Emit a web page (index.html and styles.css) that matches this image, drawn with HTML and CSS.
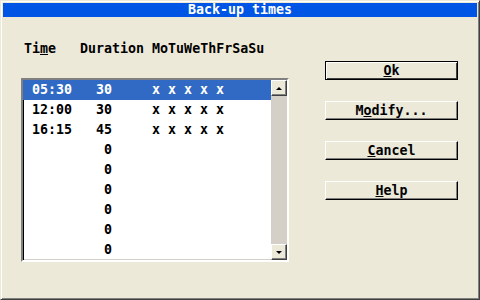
FILE: index.html
```html
<!DOCTYPE html>
<html lang="en">
  <head>
    <meta charset="UTF-8" />
    <title>Back-up times</title>
    <link rel="stylesheet" href="styles.css">
  </head>
  <body>
    <div class="window">
      <div class="titlebar">Back-up times</div>
      <div class="dialog">
        <div class="left">
          <div class="colheads">Ti<u>m</u>e   Duration MoTuWeThFrSaSu</div>
          <div class="listbox">
            <div class="rows">
              <div class="row selected">05:30   30     x x x x x</div>
              <div class="row">12:00   30     x x x x x</div>
              <div class="row">16:15   45     x x x x x</div>
              <div class="row">         0</div>
              <div class="row">         0</div>
              <div class="row">         0</div>
              <div class="row">         0</div>
              <div class="row">         0</div>
              <div class="row">         0</div>
            </div>
            <div class="scrollbar">
              <div class="sbtn"><span class="arrow up"></span></div>
              <div class="track"></div>
              <div class="sbtn"><span class="arrow down"></span></div>
            </div>
          </div>
        </div>
        <div class="buttons">
          <button class="btn default"><u>O</u>k</button>
          <button class="btn">M<u>o</u>dify...</button>
          <button class="btn"><u>C</u>ancel</button>
          <button class="btn"><u>H</u>elp</button>
        </div>
      </div>
    </div>
  </body>
</html>
```

FILE: styles.css
```css
/* Old-style dialog box */
body {
  margin: 0;
  padding: 0;
  background: #ece9d8;
  font-family: "DejaVu Sans Mono", "Liberation Mono", monospace;
  font-weight: bold;
  font-size: 13.3px;
}
.window {
  box-sizing: border-box;
  width: 480px;
  height: 300px;
  padding: 2px;
  background: #ece9d8;
  border: 1px solid;
  border-color: #ece9d8 #404040 #404040 #ece9d8;
  box-shadow: inset 1px 1px #fff, inset -1px -1px #808080;
}
.titlebar {
  height: 14px;
  line-height: 14px;
  background: #0055e5;
  color: #fff;
  text-align: center;
}
.dialog {
  display: flex;
  padding-left: 18px;
}
.left {
  width: 268px;
}
.colheads {
  margin-top: 24px;
  margin-left: 3px;
  height: 16px;
  line-height: 16px;
  white-space: pre;
  color: #000;
}
.colheads u {
  text-decoration-thickness: 1px;
}
.listbox {
  box-sizing: border-box;
  display: flex;
  margin-top: 21px;
  height: 184px;
  background: #fff;
  border: 2px solid;
  border-color: #808080 #fff #fff #808080;
  box-shadow: inset 1px 1px #000, inset -1px -1px #d4d0c8;
}
.rows {
  flex: 1;
}
.row {
  height: 20px;
  line-height: 20px;
  padding-left: 9px;
  white-space: pre;
  color: #000;
}
.row.selected {
  background: #316ac5;
  color: #fff;
}
.scrollbar {
  width: 16px;
  display: flex;
  flex-direction: column;
  background: #d4d0c8;
}
.track {
  flex: 1;
}
.sbtn {
  box-sizing: border-box;
  height: 16px;
  display: flex;
  align-items: center;
  justify-content: center;
  background: #ece9d8;
  border: 1px solid;
  border-color: #fff #404040 #404040 #fff;
  box-shadow: inset -1px -1px #808080;
}
.arrow {
  width: 0;
  height: 0;
  border-left: 3px solid transparent;
  border-right: 3px solid transparent;
}
.arrow.up {
  border-bottom: 3px solid #000;
}
.arrow.down {
  border-top: 3px solid #000;
}
.buttons {
  display: flex;
  flex-direction: column;
  gap: 21px;
  margin-left: 36px;
  padding-top: 44px;
}
.btn {
  box-sizing: border-box;
  width: 133px;
  height: 19px;
  padding: 0;
  font: inherit;
  line-height: 16px;
  color: #000;
  background: #ece9d8;
  border: 1px solid;
  border-color: #fff #000 #000 #fff;
  box-shadow: inset -1px -1px #808080;
}
.btn.default {
  border-color: #000;
  box-shadow: inset 1px 1px #fff, inset -1px -1px #404040;
}
.btn u {
  text-decoration-thickness: 1px;
}
```
